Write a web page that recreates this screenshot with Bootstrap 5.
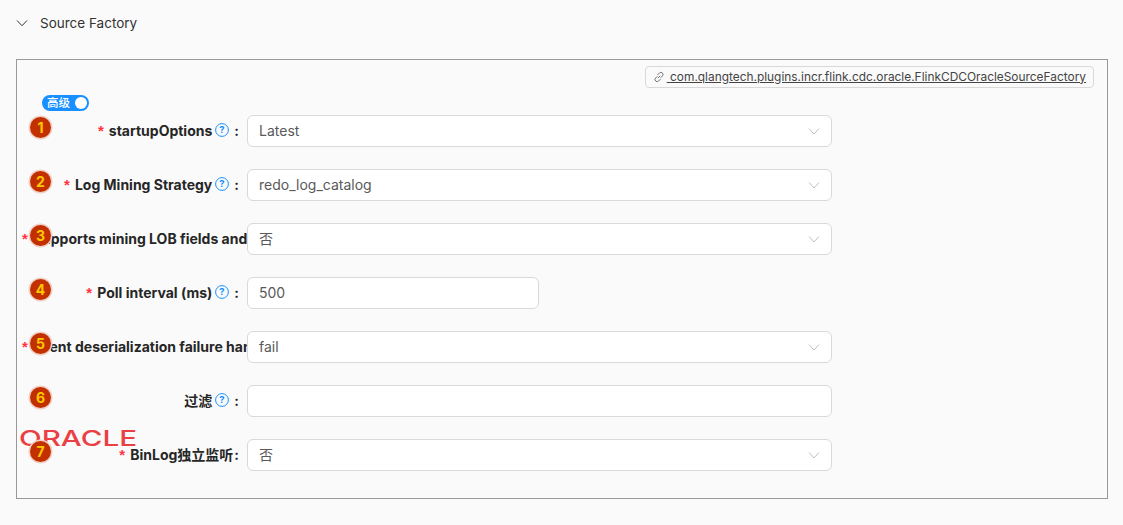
<!DOCTYPE html>
<html lang="en">
<head>
<meta charset="utf-8">
<title>Source Factory</title>
<link href="https://cdn.jsdelivr.net/npm/bootstrap@5.3.0/dist/css/bootstrap.min.css" rel="stylesheet">
<style>
html,body{height:100%}
body{background:#fafafa;font-family:Inter,"Noto Sans CJK SC",sans-serif;font-size:14px;color:#262626;overflow:hidden}
.sec-head{height:46px;padding:0 0 0 16px;gap:12px;color:#333;font-size:13.5px}
.sec-box{position:relative;margin:13px 15px 0 16px;height:440px;border:1px solid #999;padding:6px 13px 0 5px}
.cls-chip{height:22px;border:1px solid #d9d9d9;border-radius:4px;padding:0 7px 1px;font-size:11.9px;color:#444;gap:2px;background:#fafafa}
.cls-chip span{text-decoration:underline}
.adv-switch{width:47px;height:16px;margin:7px 0 4px 20px;background:#1890ff;border-radius:8px;color:#fff;font-size:11.5px;font-weight:500;line-height:16px;padding:0 2px 0 5px}
.adv-knob{width:12px;height:12px;background:#fff;border-radius:50%}
.fld-row{position:relative;height:32px;margin-bottom:22px}
.fld-label{width:225px;height:32px;flex:none;overflow:hidden;white-space:nowrap;font-weight:700;color:#262626;justify-content:flex-end;gap:3px;padding-bottom:2px}
.fld-label.clip{justify-content:flex-start}
.req{color:#ff3341;margin-right:2px;font-weight:700;font-family:"Liberation Sans",sans-serif;font-size:15px;line-height:1}
.colon{margin:0 8px 0 2px;font-weight:700}
.colon.tight{margin-left:-2px}
.fld-ctl{width:585px;height:32px;padding:0 11px 2px;border:1px solid #d9d9d9;border-radius:6px;background:#fff;color:#595959;font-size:14px;box-shadow:none}
.fld-ctl.half{width:292px}
.fld-ctl svg{margin:2px 0 0}
.num-dot{position:absolute;left:8px;top:2px;width:21px;height:21px;border-radius:50%;background:#c33000;box-shadow:0 0 0 1.5px #f0cfc5;color:#ffc800;font-weight:700;font-size:14px;line-height:21px;text-align:center;z-index:3}
.ora-logo{position:absolute;left:1px;top:370px;z-index:2}
</style>
</head>
<body>
<div class="sec-head d-flex align-items-center">
<svg width="12" height="12" viewBox="0 0 12 12" fill="none" stroke="#333" stroke-width="1"><path d="M1 3.500 6 8.700 11 3.500"/></svg>
<span>Source Factory</span>
</div>
<div class="sec-box">
<svg class="ora-logo" width="120" height="18" viewBox="0 0 120 18"><text x="1" y="16" font-family="Inter" font-size="22" font-weight="500" fill="#ea3f43" textLength="118" lengthAdjust="spacingAndGlyphs">ORACLE</text></svg>
<div class="d-flex justify-content-end">
<div class="cls-chip d-inline-flex align-items-center">
<svg width="12" height="12" viewBox="0 0 12 12" fill="none" stroke="#666" stroke-width="0.9"><path d="M4.400 4 6.400 2a2 2 0 0 1 3 3L7.600 6.800"/><path d="M7.600 8 5.600 10a2 2 0 0 1-3-3L4.400 5.200"/><path d="M4.800 7.200 7.200 4.800"/></svg>
<span>&nbsp;com.qlangtech.plugins.incr.flink.cdc.oracle.FlinkCDCOracleSourceFactory</span>
</div>
</div>
<div class="adv-switch d-flex align-items-center justify-content-between"><span>高级</span><i class="adv-knob d-block"></i></div>

<div class="fld-row d-flex align-items-center">
<b class="num-dot">1</b>
<div class="fld-label d-flex align-items-center"><span class="req">*</span>startupOptions<svg width="14" height="14" viewBox="0 0 14 14"><circle cx="7" cy="7" r="6.4" fill="none" stroke="#1890ff"/><text x="7" y="10.3" text-anchor="middle" font-family="Inter" font-size="9.5" fill="#1890ff">?</text></svg><span class="colon">:</span></div>
<div class="fld-ctl form-control d-flex align-items-center justify-content-between"><span>Latest</span><svg width="12" height="12" viewBox="0 0 12 12" fill="none" stroke="#bfbfbf"><path d="M1 3.500 6 9 11 3.500"/></svg></div>
</div>

<div class="fld-row d-flex align-items-center">
<b class="num-dot">2</b>
<div class="fld-label d-flex align-items-center"><span class="req">*</span>Log Mining Strategy<svg width="14" height="14" viewBox="0 0 14 14"><circle cx="7" cy="7" r="6.4" fill="none" stroke="#1890ff"/><text x="7" y="10.3" text-anchor="middle" font-family="Inter" font-size="9.5" fill="#1890ff">?</text></svg><span class="colon">:</span></div>
<div class="fld-ctl form-control d-flex align-items-center justify-content-between"><span>redo_log_catalog</span><svg width="12" height="12" viewBox="0 0 12 12" fill="none" stroke="#bfbfbf"><path d="M1 3.500 6 9 11 3.500"/></svg></div>
</div>

<div class="fld-row d-flex align-items-center">
<b class="num-dot">3</b>
<div class="fld-label clip d-flex align-items-center"><span class="req">*</span>Supports mining LOB fields and operations</div>
<div class="fld-ctl form-control d-flex align-items-center justify-content-between"><span>否</span><svg width="12" height="12" viewBox="0 0 12 12" fill="none" stroke="#bfbfbf"><path d="M1 3.500 6 9 11 3.500"/></svg></div>
</div>

<div class="fld-row d-flex align-items-center">
<b class="num-dot">4</b>
<div class="fld-label d-flex align-items-center"><span class="req">*</span>Poll interval (ms)<svg width="14" height="14" viewBox="0 0 14 14"><circle cx="7" cy="7" r="6.4" fill="none" stroke="#1890ff"/><text x="7" y="10.3" text-anchor="middle" font-family="Inter" font-size="9.5" fill="#1890ff">?</text></svg><span class="colon">:</span></div>
<input class="fld-ctl half form-control" value="500">
</div>

<div class="fld-row d-flex align-items-center">
<b class="num-dot">5</b>
<div class="fld-label clip d-flex align-items-center"><span class="req">*</span>Event deserialization failure handling</div>
<div class="fld-ctl form-control d-flex align-items-center justify-content-between"><span>fail</span><svg width="12" height="12" viewBox="0 0 12 12" fill="none" stroke="#bfbfbf"><path d="M1 3.500 6 9 11 3.500"/></svg></div>
</div>

<div class="fld-row d-flex align-items-center">
<b class="num-dot">6</b>
<div class="fld-label d-flex align-items-center">过滤<svg width="14" height="14" viewBox="0 0 14 14"><circle cx="7" cy="7" r="6.4" fill="none" stroke="#1890ff"/><text x="7" y="10.3" text-anchor="middle" font-family="Inter" font-size="9.5" fill="#1890ff">?</text></svg><span class="colon">:</span></div>
<input class="fld-ctl form-control" value="">
</div>

<div class="fld-row d-flex align-items-center">
<b class="num-dot">7</b>
<div class="fld-label d-flex align-items-center"><span class="req">*</span>BinLog独立监听<span class="colon tight">:</span></div>
<div class="fld-ctl form-control d-flex align-items-center justify-content-between"><span>否</span><svg width="12" height="12" viewBox="0 0 12 12" fill="none" stroke="#bfbfbf"><path d="M1 3.500 6 9 11 3.500"/></svg></div>
</div>
</div>
<script src="https://cdn.jsdelivr.net/npm/bootstrap@5.3.0/dist/js/bootstrap.bundle.min.js"></script>
</body>
</html>
